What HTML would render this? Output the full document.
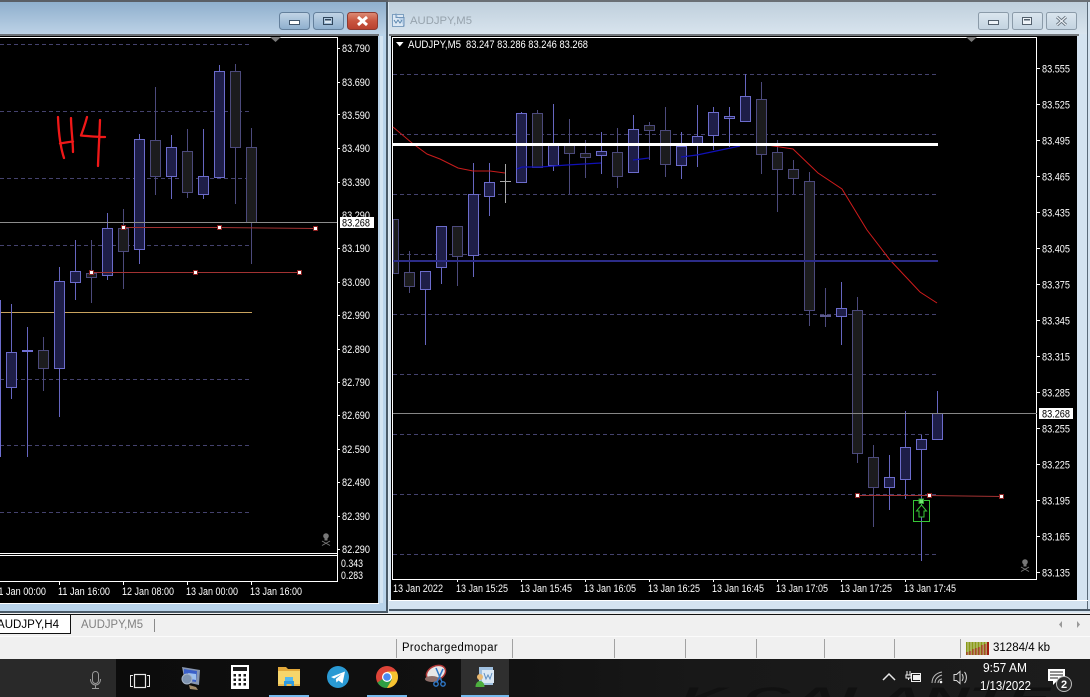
<!DOCTYPE html>
<html><head><meta charset="utf-8"><title>AUDJPY</title>
<style>
html,body{margin:0;padding:0;background:#f0f0f0;width:1090px;height:697px;overflow:hidden}
svg{display:block}
text{font-family:"Liberation Sans",sans-serif}
.ax text,.ax{fill:#fff;font-size:11px}
.up{stroke:#6c6ccc;fill:#1e1e48;stroke-width:1}
.dn{stroke:#4c4a7c;fill:#1c1c1e;stroke-width:1}
.wu{stroke:#6666c0;fill:none}
.wd{stroke:#4c4a7c;fill:none}
.grid{stroke:#44426e;stroke-dasharray:4 3;fill:none}
.h{fill:#fff;stroke:#8a2020;stroke-width:1}
</style></head><body>
<svg width="1090" height="697" viewBox="0 0 1090 697" xmlns="http://www.w3.org/2000/svg">
<defs>
<linearGradient id="tA" x1="0" y1="0" x2="0" y2="1"><stop offset="0" stop-color="#8fafcd"/><stop offset="1" stop-color="#bcd2e6"/></linearGradient>
<linearGradient id="tI" x1="0" y1="0" x2="0" y2="1"><stop offset="0" stop-color="#bfcfdc"/><stop offset="1" stop-color="#d8e4ee"/></linearGradient>
<linearGradient id="bA" x1="0" y1="0" x2="0" y2="1"><stop offset="0" stop-color="#c2d5e6"/><stop offset="1" stop-color="#8daecd"/></linearGradient>
<linearGradient id="bI" x1="0" y1="0" x2="0" y2="1"><stop offset="0" stop-color="#dbe6ef"/><stop offset="1" stop-color="#c3d3e0"/></linearGradient>
<linearGradient id="bR" x1="0" y1="0" x2="0" y2="1"><stop offset="0" stop-color="#dc8d77"/><stop offset=".5" stop-color="#c9553f"/><stop offset="1" stop-color="#b9402e"/></linearGradient>
<linearGradient id="tb" x1="0" y1="0" x2="1" y2="0"><stop offset="0" stop-color="#0c0c0c"/><stop offset=".35" stop-color="#101010"/><stop offset=".6" stop-color="#181818"/><stop offset="1" stop-color="#1c1c1c"/></linearGradient>
</defs>

<!-- page -->
<rect width="1090" height="697" fill="#dce8f2"/>

<!-- left window -->
<rect x="0" y="0" width="388" height="613" fill="#b9d3ea"/>
<rect x="0" y="2" width="387" height="32" fill="url(#tA)"/>
<rect x="0" y="0" width="388" height="2" fill="#5a5f66"/>
<rect x="0" y="34" width="379" height="2" fill="#6d7278"/>
<rect x="0" y="36" width="378" height="567" fill="#000"/>
<rect x="0" y="603" width="379" height="1" fill="#fff"/>
<rect x="0" y="611" width="388" height="2" fill="#4a5a68"/>
<rect x="386" y="2" width="2" height="611" fill="#4a5a68"/>
<rect x="380" y="36" width="3" height="567" fill="#d4e4f2"/>

<!-- left buttons -->
<rect x="279.500" y="12.500" width="30" height="17" rx="3" fill="url(#bA)" stroke="#64809c"/>
<rect x="313.500" y="12.500" width="30" height="17" rx="3" fill="url(#bA)" stroke="#64809c"/>
<rect x="347.500" y="12.500" width="30" height="17" rx="3" fill="url(#bR)" stroke="#8c3a30"/>
<rect x="289.500" y="20.500" width="10" height="4" fill="#fff" stroke="#40566c"/>
<rect x="323.500" y="17.500" width="9" height="7" fill="none" stroke="#30465c" stroke-width="1"/><rect x="325" y="19" width="6" height="4" fill="#dce8f2"/><rect x="325" y="19" width="6" height="1.500" fill="#30465c"/>
<path d="M358 17l9 8M367 17l-9 8" stroke="#fff" stroke-width="3" fill="none"/>

<!-- left chart -->
<g>
<path class="grid" d="M0 44.500H252M0 111.500H252M0 178.500H252M0 245.500H252M0 379.500H252M0 445.500H252M0 512.500H252"/>
<path d="M0 312.500H252" stroke="#c9a35e" fill="none"/>
<path d="M0 37.500H337.500V582M0 553.500H337.500M0 555.500H337.500M0 581.500H337.500" stroke="#fff" fill="none"/>
<path d="M337 48.500h3M337 82.500h3M337 114.500h3M337 148.500h3M337 182.500h3M337 248.500h3M337 282.500h3M337 315.500h3M337 349.500h3M337 382.500h3M337 415.500h3M337 449.500h3M337 482.500h3M337 516.500h3M337 549.500h3M59.500 582v3M123.500 582v3M187.500 582v3M251.500 582v3" stroke="#fff"/>
<path class="wu" d="M59.500 267V417M75.500 240V300M107.500 213V280M139.500 134V264M171.500 135V199M203.500 129V199M219.500 65V177M27.500 327V457M11.500 304V399"/>
<path class="wd" d="M91.500 240V303M123.500 209V289M155.500 87V195M187.500 129V198M235.500 64V204M251.500 128V264M43.500 337V391"/>
<path class="up" d="M54.500 281.500h10v87h-10zM70.500 271.500h10v11h-10zM102.500 228.500h10v47h-10zM134.500 139.500h10v110h-10zM166.500 147.500h10v29h-10zM198.500 176.500h10v18h-10zM214.500 71.500h10v106h-10zM6.500 352.500h10v35h-10zM-10 387.500h10.500V300"/>
<path d="M0.500 387V457" stroke="#7070d4"/>
<path class="dn" d="M86.500 273.500h10v4h-10zM118.500 228.500h10v23h-10zM150.500 140.500h10v36h-10zM182.500 151.500h10v41h-10zM230.500 71.500h10v76h-10zM246.500 147.500h10v75h-10zM38.500 350.500h10v18h-10z"/>
<rect x="22" y="350" width="11" height="2" fill="#7070d4"/>
<path d="M0 222.500H337" stroke="#8c8c8c" fill="none"/>
<path d="M123 227.500L219 227.500L315 228.500" stroke="#a23232" fill="none"/>
<path d="M91 272.500H299" stroke="#a23232" fill="none"/>
<rect class="h" x="121.500" y="225.500" width="4" height="4"/><rect class="h" x="217.500" y="225.500" width="4" height="4"/><rect class="h" x="313.500" y="226.500" width="4" height="4"/>
<rect class="h" x="89.500" y="270.500" width="4" height="4"/><rect class="h" x="193.500" y="270.500" width="4" height="4"/><rect class="h" x="297.500" y="270.500" width="4" height="4"/>
<path d="M58 117C58.500 130 60 146 64 158M60 143.500C64 143 68 142 73 141.500M71 118C71 128 73 142 73 152M87 117C85 125 83 130 81 135.500C88 136 97 137 105 137M100 120C99.500 135 98.500 150 98 166" stroke="#f01818" stroke-width="2.300" fill="none" stroke-linecap="round" stroke-linejoin="round"/>
<path d="M270 37h11l-5.500 5z" fill="#7a7a7a"/>
<circle cx="326" cy="536" r="2.800" fill="#777"/><rect x="324.500" y="538" width="3" height="2.500" fill="#777"/><path d="M322 541l8 4.500M330 541l-8 4.500" stroke="#777" fill="none"/>
</g>
<g class="ax">
<text x="342" y="52" textLength="28" lengthAdjust="spacingAndGlyphs">83.790</text>
<text x="342" y="86" textLength="28" lengthAdjust="spacingAndGlyphs">83.690</text>
<text x="342" y="119" textLength="28" lengthAdjust="spacingAndGlyphs">83.590</text>
<text x="342" y="152" textLength="28" lengthAdjust="spacingAndGlyphs">83.490</text>
<text x="342" y="186" textLength="28" lengthAdjust="spacingAndGlyphs">83.390</text>
<text x="342" y="219" textLength="28" lengthAdjust="spacingAndGlyphs">83.290</text>
<text x="342" y="252" textLength="28" lengthAdjust="spacingAndGlyphs">83.190</text>
<text x="342" y="286" textLength="28" lengthAdjust="spacingAndGlyphs">83.090</text>
<text x="342" y="319" textLength="28" lengthAdjust="spacingAndGlyphs">82.990</text>
<text x="342" y="353" textLength="28" lengthAdjust="spacingAndGlyphs">82.890</text>
<text x="342" y="386" textLength="28" lengthAdjust="spacingAndGlyphs">82.790</text>
<text x="342" y="419" textLength="28" lengthAdjust="spacingAndGlyphs">82.690</text>
<text x="342" y="453" textLength="28" lengthAdjust="spacingAndGlyphs">82.590</text>
<text x="342" y="486" textLength="28" lengthAdjust="spacingAndGlyphs">82.490</text>
<text x="342" y="520" textLength="28" lengthAdjust="spacingAndGlyphs">82.390</text>
<text x="342" y="553" textLength="28" lengthAdjust="spacingAndGlyphs">82.290</text>
<text x="341" y="567" textLength="22" lengthAdjust="spacingAndGlyphs">0.343</text>
<text x="341" y="579" textLength="22" lengthAdjust="spacingAndGlyphs">0.283</text>
<text x="-6" y="595" textLength="52" lengthAdjust="spacingAndGlyphs">11 Jan 00:00</text>
<text x="58" y="595" textLength="52" lengthAdjust="spacingAndGlyphs">11 Jan 16:00</text>
<text x="122" y="595" textLength="52" lengthAdjust="spacingAndGlyphs">12 Jan 08:00</text>
<text x="186" y="595" textLength="52" lengthAdjust="spacingAndGlyphs">13 Jan 00:00</text>
<text x="250" y="595" textLength="52" lengthAdjust="spacingAndGlyphs">13 Jan 16:00</text>
</g>
<rect x="340" y="217" width="34" height="11" fill="#fff"/>
<text x="342" y="226.500" font-size="11" fill="#000" textLength="28" lengthAdjust="spacingAndGlyphs">83.268</text>

<!-- right window -->
<rect x="389" y="0" width="701" height="612" fill="#d4e3f0"/>
<rect x="389" y="2" width="698" height="32" fill="url(#tI)"/>
<rect x="388" y="0" width="702" height="2" fill="#6a6f74"/>
<rect x="389" y="34" width="690" height="2" fill="#74797e"/>
<rect x="391" y="36" width="686" height="564" fill="#000"/>
<rect x="1087" y="2" width="1" height="608" fill="#5a6a78"/>
<rect x="389" y="600" width="699" height="1" fill="#fff"/>
<rect x="389" y="609" width="701" height="2" fill="#4a5a68"/>

<!-- right title -->
<g>
<rect x="392.500" y="14.500" width="11" height="12" fill="#dce8f4" stroke="#7d9fc0"/>
<path d="M396 13.500v4h8v9" stroke="#6f93b8" fill="#b8d0e8" />
<path d="M394 20l2 3 2-3 2 3 2-3" stroke="#5c88b0" fill="none"/>
</g>
<text x="410" y="24" font-size="11" fill="#97a3ad" textLength="62" lengthAdjust="spacingAndGlyphs">AUDJPY,M5</text>

<!-- right buttons -->
<rect x="978.500" y="12.500" width="30" height="17" rx="2" fill="url(#bI)" stroke="#8b9ba9"/>
<rect x="1012.500" y="12.500" width="30" height="17" rx="2" fill="url(#bI)" stroke="#8b9ba9"/>
<rect x="1046.500" y="12.500" width="30" height="17" rx="2" fill="url(#bI)" stroke="#8b9ba9"/>
<rect x="988.500" y="20.500" width="10" height="4" fill="#eef3f8" stroke="#525f6c"/>
<rect x="1022.500" y="17.500" width="9" height="7" fill="#eef3f8" stroke="#525f6c"/><rect x="1024" y="19" width="6" height="1.500" fill="#525f6c"/>
<path d="M1057 17l9 8M1066 17l-9 8" stroke="#5f6b76" stroke-width="3" fill="none"/>
<path d="M1057 17l9 8M1066 17l-9 8" stroke="#e8eef4" stroke-width="1.300" fill="none"/>

<!-- right chart -->
<g>
<path class="grid" d="M393 74.500H938M393 134.500H938M393 194.500H938M393 254.500H938M393 314.500H938M393 374.500H938M393 434.500H938M393 494.500H938M393 554.500H938"/>
<path d="M392.500 579V37.500H1036.500V579M392 579.500H1037" stroke="#fff" fill="none"/>
<path d="M1037 68.500h3M1037 104.500h3M1037 140.500h3M1037 176.500h3M1037 212.500h3M1037 248.500h3M1037 284.500h3M1037 320.500h3M1037 356.500h3M1037 392.500h3M1037 428.500h3M1037 464.500h3M1037 500.500h3M1037 536.500h3M1037 572.500h3M457.500 579v3M521.500 579v3M585.500 579v3M649.500 579v3M713.500 579v3M777.500 579v3M841.500 579v3M905.500 579v3" stroke="#fff"/>
<path class="wu" d="M425.500 271V345M441.500 226V284M473.500 163V277M489.500 163V216M521.500 112V183M553.500 104V171M601.500 132V174M633.500 115V172M681.500 132V179M697.500 105V167M713.500 107V150M729.500 107V147M745.500 74V121M841.500 282V345M889.500 455V510M905.500 411V499M921.500 435V561M937.500 391V439"/>
<path class="wd" d="M409.500 251V293M457.500 226V286M537.500 110V167M569.500 119V194M585.500 140V178M617.500 128V188M649.500 122V160M665.500 107V177M761.500 82V174M777.500 140V212M793.500 160V194M809.500 172V326M825.500 288V327M857.500 297V463M873.500 445V527"/>
<path class="up" d="M420.500 271.500h10v18h-10zM436.500 226.500h10v41h-10zM468.500 194.500h10v61h-10zM484.500 182.500h10v14h-10zM516.500 113.500h10v69h-10zM548.500 143.500h10v22h-10zM596.500 151.500h10v4h-10zM628.500 129.500h10v43h-10zM676.500 146.500h10v19h-10zM692.500 136.500h10v7h-10zM708.500 112.500h10v23h-10zM724.500 116.500h10v2h-10zM740.500 96.500h10v25h-10zM836.500 308.500h10v8h-10zM884.500 477.500h10v10h-10zM900.500 447.500h10v32h-10zM916.500 439.500h10v10h-10zM932.500 413.500h10v26h-10z"/>
<path class="dn" d="M393.500 219.500h5v54h-5zM404.500 272.500h10v14h-10zM452.500 226.500h10v30h-10zM532.500 113.500h10v54h-10zM564.500 143.500h10v10h-10zM580.500 153.500h10v4h-10zM612.500 152.500h10v24h-10zM644.500 125.500h10v5h-10zM660.500 130.500h10v34h-10zM756.500 99.500h10v55h-10zM772.500 152.500h10v17h-10zM788.500 169.500h10v9h-10zM804.500 181.500h10v129h-10zM852.500 310.500h10v143h-10zM868.500 457.500h10v30h-10z"/>
<rect x="820" y="315" width="11" height="2" fill="#5c5a90"/>
<path d="M505.500 164V203M500 181.500H511" stroke="#a8a8a8" fill="none"/>
<path d="M393 127L412 143L427 154L440 159L458 168L473 171L490 171L505 173" stroke="#c81c1c" fill="none"/>
<path d="M517 169L522 167L540 167L567 165L601 163" stroke="#1010b8" stroke-width="1.300" fill="none"/>
<path d="M633 160L649 158M681 157L697 155L740 146" stroke="#1010b8" stroke-width="1.300" fill="none"/>
<path d="M767 145L793 149L818 173L842 189L867 230L890 260L920 292L937 303" stroke="#d01c1c" fill="none"/>
<rect x="393" y="143" width="545" height="3" fill="#fff"/>
<rect x="393" y="260" width="545" height="2" fill="#2c2c88"/>
<path d="M393 413.500H1037" stroke="#868686" fill="none"/>
<path d="M857 495.500L929 495.500L1001 496.500" stroke="#a23232" fill="none"/>
<rect class="h" x="855.500" y="493.500" width="4" height="4"/><rect class="h" x="927.500" y="493.500" width="4" height="4"/><rect class="h" x="999.500" y="494.500" width="4" height="4"/>
<rect x="913.500" y="500.500" width="16" height="21" fill="#000" stroke="#37c637"/>
<path d="M921.500 500V521" stroke="#6a6ac8"/>
<path d="M921.500 505l5 6h-2.500v6h-5v-6h-2.500z" fill="#000" stroke="#37c637"/>
<rect x="919" y="499" width="4.500" height="4.500" fill="#6fe86f" stroke="#2f9f2f"/>
<path d="M966 37h11l-5.500 5z" fill="#7a7a7a"/>
<circle cx="1025" cy="562" r="2.800" fill="#777"/><rect x="1023.500" y="564" width="3" height="2.500" fill="#777"/><path d="M1021 567l8 4.500M1029 567l-8 4.500" stroke="#777" fill="none"/>
<path d="M396 42h7.500l-3.750 4.500z" fill="#fff"/>
</g>
<g class="ax">
<text x="408" y="48" textLength="53" lengthAdjust="spacingAndGlyphs">AUDJPY,M5</text>
<text x="466" y="48" textLength="122" lengthAdjust="spacingAndGlyphs">83.247 83.286 83.246 83.268</text>
<text x="1042" y="72.500" textLength="28" lengthAdjust="spacingAndGlyphs">83.555</text>
<text x="1042" y="108.500" textLength="28" lengthAdjust="spacingAndGlyphs">83.525</text>
<text x="1042" y="144.500" textLength="28" lengthAdjust="spacingAndGlyphs">83.495</text>
<text x="1042" y="180.500" textLength="28" lengthAdjust="spacingAndGlyphs">83.465</text>
<text x="1042" y="216.500" textLength="28" lengthAdjust="spacingAndGlyphs">83.435</text>
<text x="1042" y="252.500" textLength="28" lengthAdjust="spacingAndGlyphs">83.405</text>
<text x="1042" y="288.500" textLength="28" lengthAdjust="spacingAndGlyphs">83.375</text>
<text x="1042" y="324.500" textLength="28" lengthAdjust="spacingAndGlyphs">83.345</text>
<text x="1042" y="360.500" textLength="28" lengthAdjust="spacingAndGlyphs">83.315</text>
<text x="1042" y="396.500" textLength="28" lengthAdjust="spacingAndGlyphs">83.285</text>
<text x="1042" y="432.500" textLength="28" lengthAdjust="spacingAndGlyphs">83.255</text>
<text x="1042" y="468.500" textLength="28" lengthAdjust="spacingAndGlyphs">83.225</text>
<text x="1042" y="504.500" textLength="28" lengthAdjust="spacingAndGlyphs">83.195</text>
<text x="1042" y="540.500" textLength="28" lengthAdjust="spacingAndGlyphs">83.165</text>
<text x="1042" y="576.500" textLength="28" lengthAdjust="spacingAndGlyphs">83.135</text>
<text x="393" y="592" textLength="50" lengthAdjust="spacingAndGlyphs">13 Jan 2022</text>
<text x="456" y="592" textLength="52" lengthAdjust="spacingAndGlyphs">13 Jan 15:25</text>
<text x="520" y="592" textLength="52" lengthAdjust="spacingAndGlyphs">13 Jan 15:45</text>
<text x="584" y="592" textLength="52" lengthAdjust="spacingAndGlyphs">13 Jan 16:05</text>
<text x="648" y="592" textLength="52" lengthAdjust="spacingAndGlyphs">13 Jan 16:25</text>
<text x="712" y="592" textLength="52" lengthAdjust="spacingAndGlyphs">13 Jan 16:45</text>
<text x="776" y="592" textLength="52" lengthAdjust="spacingAndGlyphs">13 Jan 17:05</text>
<text x="840" y="592" textLength="52" lengthAdjust="spacingAndGlyphs">13 Jan 17:25</text>
<text x="904" y="592" textLength="52" lengthAdjust="spacingAndGlyphs">13 Jan 17:45</text>
</g>
<rect x="1039" y="408" width="34" height="11" fill="#fff"/>
<text x="1042" y="417.500" font-size="11" fill="#000" textLength="28" lengthAdjust="spacingAndGlyphs">83.268</text>

<!-- tab row -->
<rect x="0" y="613" width="1090" height="46" fill="#f0f0f0"/>
<rect x="0" y="614" width="1090" height="1" fill="#111"/>
<rect x="0" y="615" width="70" height="19" fill="#fff"/>
<path d="M0 633.500H70.500V615" stroke="#111" fill="none"/>
<text x="-3" y="628" font-size="11.500" fill="#000" textLength="62" lengthAdjust="spacingAndGlyphs">AUDJPY,H4</text>
<text x="81" y="628" font-size="11.500" fill="#808080" textLength="62" lengthAdjust="spacingAndGlyphs">AUDJPY,M5</text>
<rect x="154" y="619" width="1" height="13" fill="#8a8a8a"/>
<path d="M1062 621l-3 3.500 3 3.500zM1077 621l3 3.500-3 3.500z" fill="#9a9a9a"/>
<rect x="0" y="636" width="1090" height="1" fill="#fbfbfb"/>

<!-- status bar separators -->
<path d="M396.500 639V658M512.500 639V658M614.500 639V658M685.500 639V658M756.500 639V658M824.500 639V658M894.500 639V658M960.500 639V658" stroke="#a2a2a2" fill="none"/>
<text x="402" y="651" font-size="11.500" fill="#000" letter-spacing=".4" textLength="96" lengthAdjust="spacingAndGlyphs">Prochargedmopar</text>
<g>
<rect x="966" y="642" width="23" height="13" fill="#8a9a18"/>
<path d="M967.500 655V652M970.500 655V651M973.500 655V649M976.500 655V648M979.500 655V647M982.500 655V645M985.500 655V644M988 655V642" stroke="#a01c10" stroke-width="2" fill="none"/>
<path d="M968 642V655M971 642V655M974 642V655M977 642V655M980 642V655M983 642V655M986 642V655" stroke="#f0f0f0" stroke-width=".6" fill="none"/>
</g>
<text x="993" y="651" font-size="11.500" fill="#000" textLength="57" lengthAdjust="spacingAndGlyphs">31284/4 kb</text>

<!-- taskbar -->
<rect x="0" y="659" width="1090" height="38" fill="#1a1a1a"/>
<rect x="116" y="659" width="974" height="38" fill="url(#tb)"/>
<rect x="0" y="659" width="116" height="38" fill="#292929"/>
<rect x="461" y="659" width="48" height="38" fill="#2f2f2f"/>
<text x="680" y="708" font-size="30" font-style="italic" font-weight="bold" fill="#111" textLength="370" lengthAdjust="spacingAndGlyphs">K GALANTE</text>
<rect x="269" y="695" width="40" height="2" fill="#76b9ed"/>
<rect x="367" y="695" width="40" height="2" fill="#76b9ed"/>
<rect x="461" y="695" width="48" height="2" fill="#76b9ed"/>

<!-- mic -->
<rect x="92.500" y="671.500" width="6" height="12" rx="3" fill="none" stroke="#9a9a9a"/>
<path d="M90.500 679c0 8 10 8 10 0M95.500 685v3M92 688.500h7" stroke="#9a9a9a" fill="none"/>
<!-- task view -->
<rect x="134.500" y="674.500" width="11" height="13" fill="none" stroke="#e8e8e8" stroke-width="1.200"/>
<path d="M133 675.500h-2.500v11h2.500M147 675.500h2.500v11h-2.500" stroke="#e8e8e8" fill="none"/>
<g transform="translate(0,-3)">
<!-- computer -->
<path d="M182 670l18 3-1 15-14-3z" fill="#8796b0"/><path d="M184 672l13 2-1 11-12-2z" fill="#3a5fc8"/><path d="M188 676l8 1v6l-6-1z" fill="#9cc0f0"/>
<circle cx="187" cy="682" r="5" fill="#7e93b0" stroke="#a8b6c8"/><path d="M189 688l7 2 2 3-8-1z" fill="#a08a6a"/>
<!-- calculator -->
<rect x="231" y="668" width="18" height="24" fill="#fff"/>
<rect x="233" y="670" width="14" height="4" fill="#1a1a1a"/>
<path d="M233.500 677h2.500v2.500h-2.500zM238.500 677h2.500v2.500h-2.500zM243.500 677h2.500v2.500h-2.500zM233.500 681.500h2.500v2.500h-2.500zM238.500 681.500h2.500v2.500h-2.500zM243.500 681.500h2.500v2.500h-2.500zM233.500 686h2.500v2.500h-2.500zM238.500 686h2.500v2.500h-2.500zM243.500 686h2.500v2.500h-2.500z" fill="#1a1a1a"/>
<!-- folder -->
<path d="M278 670h8l2 2h12v4h-22z" fill="#e3a93b"/>
<rect x="278" y="674" width="22" height="15" fill="#f6d56b"/>
<rect x="278" y="687" width="22" height="2" fill="#e8b84c"/>
<path d="M284 684h10v5h-2.500v-2h-5v2h-2.500z" fill="#2f9be0"/><rect x="285" y="680" width="8" height="4" fill="#54b8ee"/>
<!-- telegram -->
<circle cx="338" cy="680" r="11" fill="#2a9ad4"/>
<path d="M331 680l14-5.500-2.500 12-4-3-2 2-.7-3.500 6-5-7.700 4.500z" fill="#fff"/>
<!-- chrome -->
<circle cx="387" cy="680" r="11" fill="#dd4438"/>
<path d="M377.500 685.500A11 11 0 0 0 387 691l5.500-9.500-9 -.2z" fill="#2f9e44"/>
<path d="M387 691A11 11 0 0 0 396.500 674.500H387l5 8z" fill="#f5c330"/>
<circle cx="387" cy="680" r="5" fill="#fff"/><circle cx="387" cy="680" r="3.800" fill="#4a8af0"/>
<!-- paint -->
<ellipse cx="436" cy="676" rx="10" ry="7" fill="#e8e8e8" stroke="#b03838" stroke-width="1.500" transform="rotate(-25 436 676)"/>
<ellipse cx="432" cy="682" rx="7" ry="3" fill="#8e6e6a"/>
<path d="M436 671l6 14M443 672l-6 13" stroke="#2f78c8" stroke-width="1.500" fill="none"/>
<circle cx="436" cy="687" r="2.200" fill="none" stroke="#2f78c8" stroke-width="1.400"/><circle cx="443" cy="687" r="2.200" fill="none" stroke="#2f78c8" stroke-width="1.400"/>
<!-- active app -->
<rect x="479" y="670" width="14" height="18" fill="#9fc0e0"/>
<rect x="482" y="673" width="12" height="13" fill="#dbe8f4"/>
<path d="M484 676l2 6 2-4 2 4 2-6" stroke="#5f8fc0" fill="none"/>
<circle cx="480" cy="680" r="3" fill="#e8b870"/>
<path d="M475.500 690c0-8 9-8 9 0z" fill="#4caf3e"/>
</g>

<!-- tray -->
<path d="M883 680l6-6 6 6" stroke="#e8e8e8" stroke-width="1.500" fill="none"/>
<g transform="translate(0,-3)">
<path d="M907 674v4M910 674v4M906 678h5v3h-5z M908.500 681v2" stroke="#f0f0f0" fill="none"/>
<rect x="911.500" y="676.500" width="9" height="8" fill="none" stroke="#f0f0f0"/><rect x="913" y="678" width="7" height="5" fill="#f0f0f0"/>
<path d="M932 686c0-6 4-10 10-11M935 686c0-4 3-7 7-8M938 686c0-2 1.500-4 4-4" stroke="#b8b8b8" fill="none"/>
<circle cx="941" cy="685" r="1.300" fill="#f0f0f0"/>
<path d="M954 677.500h2.500l3.500-3v12l-3.500-3H954zM962 677c1.500 2 1.500 5 0 7M964.500 675c2.500 3 2.500 8 0 11" stroke="#d8d8d8" fill="none"/>
</g>
<text x="983" y="672" font-size="12.500" fill="#fff" textLength="44" lengthAdjust="spacingAndGlyphs">9:57 AM</text>
<text x="980" y="690" font-size="12.500" fill="#fff" textLength="51" lengthAdjust="spacingAndGlyphs">1/13/2022</text>
<path d="M1048 669h17v12h-8l-4 4v-4h-5z" fill="#fff"/>
<path d="M1050 672h13M1050 675h13M1050 678h8" stroke="#222" fill="none"/>
<circle cx="1064" cy="684" r="7.500" fill="#2d2d2d" stroke="#bdbdbd"/>
<text x="1064" y="688" font-size="11" font-weight="bold" fill="#fff" text-anchor="middle">2</text>
</svg>
</body></html>
